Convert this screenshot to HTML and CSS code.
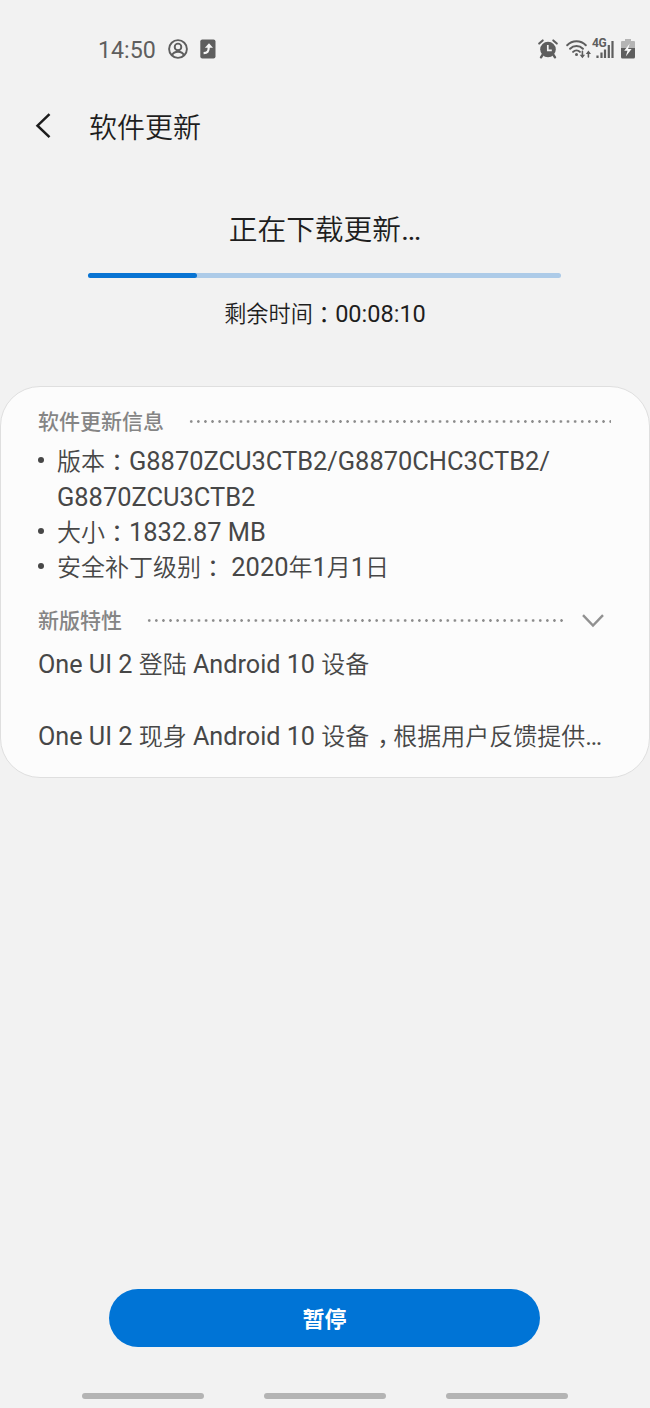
FILE: index.html
```
<!DOCTYPE html>
<html lang="zh-CN">
<head>
<meta charset="utf-8">
<title>软件更新</title>
<link rel="stylesheet" href="styles.css">
</head>
<body>
<div class="screen">
  <header class="status">
    <div class="status-left">
      <span class="clock">14:50</span>
      <svg class="i-user" width="20" height="20" viewBox="0 0 20 20" fill="none" stroke="#5e5e5e" stroke-width="1.9"><circle cx="10" cy="10" r="8.9"/><circle cx="10" cy="7.9" r="3.3"/><path d="M4.2 16.2C5.2 13.6 7.4 12.8 10 12.8s4.8.8 5.8 3.4"/></svg>
      <svg width="16" height="20" viewBox="0 0 16 20"><rect x=".3" y=".5" width="15.2" height="19" rx="2" fill="#5e5e5e"/><path d="M3.6 14.2C7.5 14 8.6 12.600 8.800 8" fill="none" stroke="#f6f6f6" stroke-width="2.200"/><path d="M4.900 8.800 9 4.300l4 4.500z" fill="#f6f6f6"/></svg>
    </div>
    <div class="status-right">
      <svg width="20" height="20" viewBox="0 0 20 20"><path d="M4.500 16 3 18.300M15.500 16l1.500 2.300" stroke="#5e5e5e" stroke-width="2.400" stroke-linecap="round"/><circle cx="10" cy="10.500" r="7.800" fill="#5e5e5e"/><path d="M1.200 4.600 4.700 1.400M18.800 4.600l-3.500-3.200" stroke="#5e5e5e" stroke-width="2" stroke-linecap="round"/><path d="M9.800 6v5.300h4" fill="none" stroke="#f5f5f5" stroke-width="1.700"/></svg>
      <svg class="i-wifi" width="26" height="21" viewBox="0 0 26 21" fill="none" stroke="#5e5e5e" stroke-width="2" stroke-linecap="round"><path d="M1.200 6.200c5-5.300 13.600-5.300 18.600 0M4.100 9.700c3.500-3.600 9.300-3.600 12.800 0M7.100 12.900c1.900-1.900 4.900-1.900 6.800 0"/><circle cx="10.500" cy="15.500" r="1.500" fill="#5e5e5e" stroke="none"/><path d="M16.400 12.200v5.200M22.400 18v-4.500" stroke-width="1.600"/><path d="M13.700 15.700h5.400l-2.700 3.600zM19.800 14.900h5.200l-2.600-3.500z" fill="#5e5e5e" stroke="none"/></svg>
      <div class="signal">
        <svg width="18" height="18" viewBox="0 0 18 18" stroke="#5e5e5e" stroke-width="2.200"><path d="M1.500 15.500V18M5.500 12.500V18M9 9.500V18M12.800 5v13M16.500 1v17"/></svg>
        <span class="net">4G</span>
      </div>
      <svg width="14" height="20" viewBox="0 0 14 20"><path d="M4 0h6v2h3q1 0 1 1v7H0V3q0-1 1-1h3z" fill="#b4b4b4"/><path d="M0 9h14v9q0 1.500-1.500 1.500h-11Q0 19.500 0 18z" fill="#5e5e5e"/><path d="M8.800 4.500 3.200 11.800h3.300L4.800 17.400l5.800-7.500H7.100z" fill="#f8f8f8"/></svg>
    </div>
  </header>

  <nav class="titlebar">
    <svg width="16" height="26" viewBox="0 0 16 26" fill="none" stroke="#1c1c1c" stroke-width="2.500"><path d="M14.500 1.200 2.500 12.700 14.500 24.200"/></svg>
    <h1 class="title">软件更新</h1>
  </nav>

  <section class="download">
    <p class="state">正在下载更新<span class="lat">…</span></p>
    <div class="progress"><div class="progress-fill" style="width:23%"></div></div>
    <p class="remaining">剩余时间<span class="colon" lang="zh-TW">：</span><span class="lat">00:08:10</span></p>
  </section>

  <section class="card">
    <div class="section-head">
      <h2>软件更新信息</h2>
      <div class="dots"></div>
    </div>
    <ul class="info">
      <li>版本<span class="colon" lang="zh-TW">：</span><span class="lat">G8870ZCU3CTB2/G8870CHC3CTB2/<br>G8870ZCU3CTB2</span></li>
      <li>大小<span class="colon" lang="zh-TW">：</span><span class="lat">1832.87 MB</span></li>
      <li>安全补丁级别<span class="colon" lang="zh-TW">：</span><span class="lat"> 2020</span>年<span class="lat">1</span>月<span class="lat">1</span>日</li>
    </ul>
    <div class="section-head features-head">
      <h2>新版特性</h2>
      <div class="dots"></div>
      <svg class="chevron" width="22" height="14" viewBox="0 0 22 14" fill="none" stroke="#919191" stroke-width="2.400"><path d="M1 1.200 11 11.600 21 1.200"/></svg>
    </div>
    <p class="feature"><span class="lat">One UI 2 </span>登陆<span class="lat"> Android 10 </span>设备</p>
    <p class="feature"><span class="lat">One UI 2 </span>现身<span class="lat"> Android 10 </span>设备<span class="comma">，</span>根据用户反馈提供<span class="lat">…</span></p>
  </section>

  <button class="pause">暂停</button>
  <footer class="gestures"><i></i><i></i><i></i></footer>
</div>
</body>
</html>
```
FILE: styles.css
```
* { box-sizing: border-box; }
body, h1, h2, p, ul { margin: 0; padding: 0; }
body {
  background: #f2f2f2;
  font-family: Roboto, "Noto Sans CJK SC", sans-serif;
  color: #1e1e1e;
}
.screen {
  width: 650px;
  height: 1408px;
  display: flex;
  flex-direction: column;
  overflow: hidden;
}
svg { display: block; flex: none; }

.status {
  height: 98px;
  padding: 0 15px 0 98px;
  display: flex;
  justify-content: space-between;
  align-items: center;
  color: #5e5e5e;
}
.status-left, .status-right { display: flex; align-items: center; }
.clock { font-size: 23.200px; line-height: 28px; width: 70px; padding-top: 2px; }
.i-user { margin-right: 12px; }
.i-wifi { margin-left: 8px; }
.signal { display: flex; width: 22px; margin-right: 7px; align-items: flex-end; justify-content: flex-end; position: relative; }
.net { position: absolute; left: 0; top: -2px; font-size: 12px; line-height: 11px; font-weight: 700; letter-spacing: -0.500px; background: #f2f2f2; }

.titlebar {
  height: 56px;
  padding-left: 35px;
  display: flex;
  align-items: center;
  gap: 38px;
}
.title { font-size: 28px; line-height: 40px; font-weight: 350; padding-top: 5px; }

.download { height: 232px; padding-top: 56px; text-align: center; font-weight: 350; }
.state { font-size: 28.700px; line-height: 40px; }
.progress {
  width: 473px;
  height: 5px;
  margin: 23px 0 0 88.400px;
  border-radius: 3px;
  background: #adcbe8;
}
.progress-fill { height: 5px; border-radius: 3px; background: #0974d3; }
.remaining { margin-top: 20px; font-size: 22.200px; line-height: 32px; }
.lat { font-size: 1.060em; font-weight: 400; line-height: 1; }
.colon { position: relative; top: 1px; font-family: "Noto Sans CJK TC", sans-serif; line-height: 1; font-weight: 400; }
.comma { margin-left: 8px; letter-spacing: -8px; }

.card {
  height: 392px;
  padding: 19px 38px 0 37px;
  border: 1px solid #dfdfdf;
  border-radius: 40px;
  background: #fcfcfc;
  color: #474747;
  font-size: 24px;
  font-weight: 350;
}
.section-head { display: flex; align-items: center; height: 31px; color: #858585; }
.section-head h2 { font-size: 21px; line-height: 32px; font-weight: 500; }
.dots {
  flex: 1;
  height: 3px;
  margin-left: 25px;
  background: radial-gradient(circle at 2.200px 1.500px, #8c8c8c 1px, transparent 1.600px) 0 0 / 7.110px 3px repeat-x;
}
.info { list-style: none; margin-top: 7px; line-height: 34.500px; }
.info li { position: relative; padding-left: 19px; white-space: nowrap; }
.info li:first-child { line-height: 36px; }
.info li::before {
  content: "";
  position: absolute;
  left: 0;
  top: 12px;
  width: 6px;
  height: 6px;
  border-radius: 50%;
  background: #474747;
}
.info li:first-child::before { top: 13px; }
.features-head { margin-top: 20px; }
.chevron { margin: 0 7px 0 17px; }
.feature { line-height: 36px; margin: 11px 0 36px; white-space: nowrap; }
.feature .lat { font-size: 1.050em; }
.feature + .feature { margin: 0; }

.pause {
  width: 431px;
  height: 58px;
  margin: 511px 0 0 109px;
  padding: 3px 0 0;
  border: 0;
  border-radius: 29px;
  background: #0074d6;
  color: #fff;
  font: 700 22px/32px Roboto, "Noto Sans CJK SC", sans-serif;
}
.gestures { display: flex; gap: 60px; margin: 46px 0 0 82px; }
.gestures i { width: 122px; height: 6px; border-radius: 3px; background: #b4b4b4; }
```
